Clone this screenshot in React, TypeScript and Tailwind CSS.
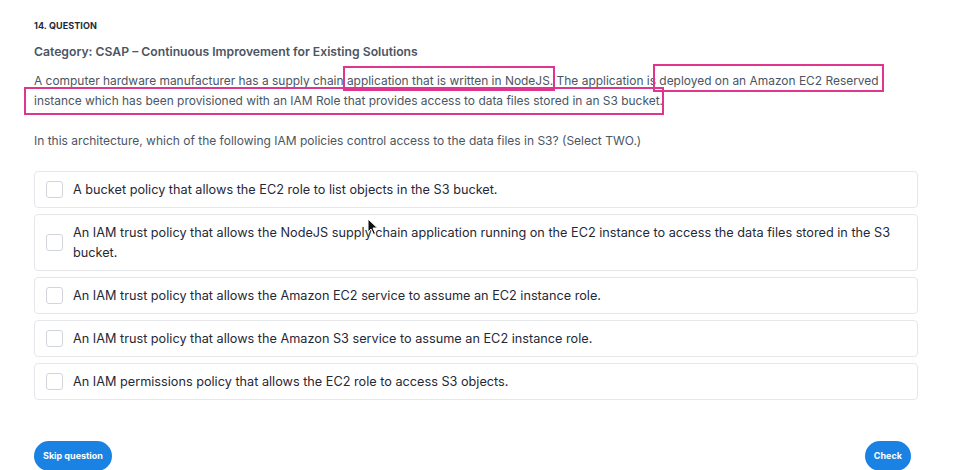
import { useState } from 'react';

const options = [
  'A bucket policy that allows the EC2 role to list objects in the S3 bucket.',
  'An IAM trust policy that allows the NodeJS supply chain application running on the EC2 instance to access the data files stored in the S3 bucket.',
  'An IAM trust policy that allows the Amazon EC2 service to assume an EC2 instance role.',
  'An IAM trust policy that allows the Amazon S3 service to assume an EC2 instance role.',
  'An IAM permissions policy that allows the EC2 role to access S3 objects.',
];

export default function App() {
  const [checked, setChecked] = useState<Set<number>>(new Set());

  const toggle = (i: number) => {
    setChecked((prev) => {
      const next = new Set(prev);
      if (next.has(i)) next.delete(i);
      else next.add(i);
      return next;
    });
  };

  return (
    <div
      className="relative min-h-[470px] w-[961px] overflow-hidden bg-white"
      style={{ fontFamily: 'Inter, "Noto Sans", sans-serif' }}
    >
      <div className="w-[884px] ml-[34px] pt-[20px]">
        <div className="text-[9px] font-bold leading-[11px] text-[#1e293b] tracking-[0.1px]">14. QUESTION</div>

        <div className="mt-[13px] text-[12.2px] font-semibold leading-[16px] text-[#4b5563]">
          Category: CSAP – Continuous Improvement for Existing Solutions
        </div>

        <p className="mt-[11px] text-[11.95px] leading-[20px] text-[#4b5563]">
          A computer hardware manufacturer has a supply chain application that is written in NodeJS. The
          application is deployed on an Amazon EC2 Reserved instance which has been provisioned with an IAM
          Role that provides access to data files stored in an S3 bucket.
        </p>

        <p className="mt-[20px] text-[12px] leading-[20px] text-[#4b5563]">
          In this architecture, which of the following IAM policies control access to the data files in S3? (Select TWO.)
        </p>

        <div className="mt-[20px] flex flex-col gap-[6px]">
          {options.map((text, i) => (
            <label
              key={i}
              className="flex items-center gap-[10px] rounded-[4px] border border-[#e5e7eb] pl-[11px] pr-[20px] py-[7.5px] cursor-pointer"
            >
              <span
                onClick={(e) => {
                  e.preventDefault();
                  toggle(i);
                }}
                className={`h-[17px] w-[17px] shrink-0 rounded-[3px] border ${
                  checked.has(i) ? 'border-[#1a82e2] bg-[#1a82e2]' : 'border-[#d1d5db] bg-white'
                }`}
              />
              <span className="text-[12.7px] leading-[20px] text-[#1f2937]">{text}</span>
            </label>
          ))}
        </div>

        <div className="mt-[41px] flex items-start justify-between pr-[7px]">
          <button className="h-[30px] rounded-full bg-[#1a82e2] px-[9px] text-[9px] font-bold text-white">
            Skip question
          </button>
          <button className="h-[30px] rounded-full bg-[#1a82e2] px-[9px] text-[9px] font-bold text-white">
            Check
          </button>
        </div>
      </div>

      {/* annotation boxes drawn over the paragraph */}
      <div className="pointer-events-none absolute left-[343px] top-[66px] h-[25px] w-[212px] border-2 border-[#e0358e]" />
      <div className="pointer-events-none absolute left-[653px] top-[64px] h-[28px] w-[231px] border-2 border-[#e0358e]" />
      <div className="pointer-events-none absolute left-[24px] top-[87px] h-[28px] w-[640px] border-2 border-[#e0358e]" />

      {/* mouse pointer */}
      <svg
        className="pointer-events-none absolute left-[367px] top-[218px]"
        width="12"
        height="18"
        viewBox="0 0 12 18"
      >
        <path d="M1 1 L1 14 L4 11 L6.5 16.5 L8.5 15.5 L6 10 L10.5 10 Z" fill="#111" stroke="#fff" strokeWidth="1" />
      </svg>
    </div>
  );
}
